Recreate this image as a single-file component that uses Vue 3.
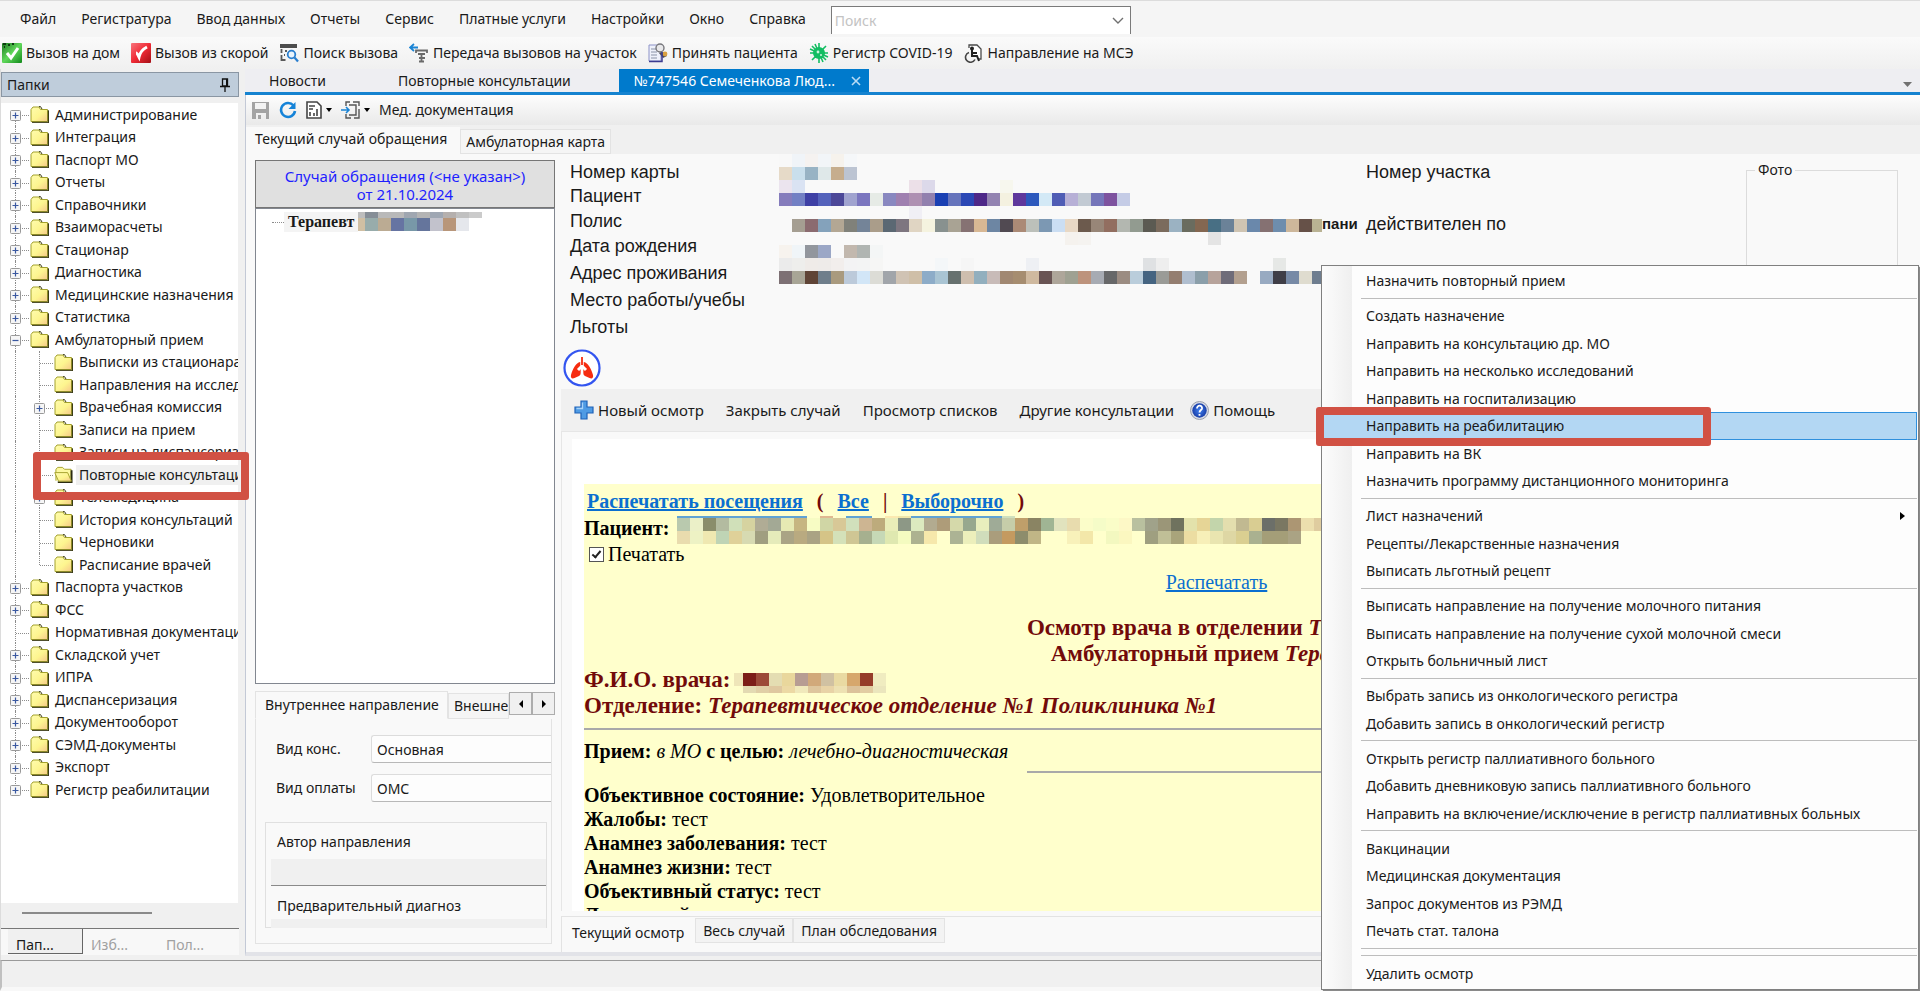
<template>
  <div class="app">
    <svg class="symbols" aria-hidden="true">
      <defs>
        <linearGradient id="folderFill" x1="0" y1="0" x2="1" y2="1">
          <stop offset="0" stop-color="#fffcae" />
          <stop offset="0.55" stop-color="#fdf58f" />
          <stop offset="1" stop-color="#f6c98a" />
        </linearGradient>
        <linearGradient id="greenFill" x1="0" y1="0" x2="1" y2="1">
          <stop offset="0" stop-color="#1f7a22" />
          <stop offset="0.5" stop-color="#5fd75a" />
          <stop offset="1" stop-color="#128a1b" />
        </linearGradient>
        <linearGradient id="redFill" x1="0" y1="0" x2="1" y2="1">
          <stop offset="0" stop-color="#f8747c" />
          <stop offset="0.5" stop-color="#ef2b36" />
          <stop offset="1" stop-color="#a40f16" />
        </linearGradient>
        <radialGradient id="helpFill">
          <stop offset="0" stop-color="#3f7ff0" />
          <stop offset="1" stop-color="#1a3fa8" />
        </radialGradient>
        <symbol id="folder" viewBox="0 0 19 17">
          <path d="M2 16.500h16V4.500h1V17H2z" fill="#3d3d16" />
          <path d="M1 15.500V3.500l2-2.500h6l1.500 2.500H17.500v12z" fill="url(#folderFill)" stroke="#a3a12c" />
          <path d="M9 .6h1.500L12 3" fill="none" stroke="#3d3d16" />
          <path d="M2 16.300h16.300V4.500" fill="none" stroke="#3d3d16" />
        </symbol>
        <symbol id="folder-open" viewBox="0 0 20 17">
          <path d="M2 15V3l2-2h5l2 2h7v10" fill="#fdf9a0" stroke="#a3a12c" />
          <path d="M18.500 4v12.500H4" fill="none" stroke="#2b2b10" stroke-width="2" />
          <path d="M.8 6.500h13.500l4 9H4.800z" fill="url(#folderFill)" stroke="#a3a12c" />
        </symbol>
      </defs>
    </svg>

    <header class="menubar">
      <button v-for="item in mainMenu" :key="item" class="menubar-item">{{ item }}</button>
      <div class="search">
        <input type="text" placeholder="Поиск" aria-label="Поиск" />
        <svg width="12" height="8" viewBox="0 0 12 8">
          <path d="M1 1l5 5 5-5" fill="none" stroke="#707070" stroke-width="1.400" />
        </svg>
      </div>
    </header>

    <div class="quickbar">
      <button class="quick">
        <svg width="20" height="20" viewBox="0 0 20 20">
          <rect width="20" height="20" rx="1" fill="url(#greenFill)" />
          <path d="M5 10l4 5 7-10" fill="none" stroke="#fff" stroke-width="3" />
          <path d="M1 1h3M6 2h2M2 4h1M10 1h2" stroke="#0d3d10" stroke-width="2" />
        </svg>
        Вызов на дом
      </button>
      <button class="quick">
        <svg width="20" height="20" viewBox="0 0 20 20">
          <rect width="20" height="20" rx="1" fill="url(#redFill)" />
          <path d="M5 10c1 0 2 2 3 4 1-5 4-8 8-10" fill="none" stroke="#fff" stroke-width="3" />
        </svg>
        Вызов из скорой
      </button>
      <button class="quick">
        <svg width="20" height="20" viewBox="0 0 20 20">
          <path d="M1 1h17v4H1z" fill="#4c4c4c" />
          <path d="M2.500 6v4M2.500 12v5h4M6 8h2M5 12h1" fill="none" stroke="#5a5a5a" stroke-width="1.800" />
          <circle cx="12.500" cy="11.500" r="3.800" fill="#eaf4fc" stroke="#2a7fcf" stroke-width="1.800" />
          <path d="M15.500 14.500l3.500 4" stroke="#2a7fcf" stroke-width="2.200" />
        </svg>
        Поиск вызова
      </button>
      <button class="quick">
        <svg width="20" height="20" viewBox="0 0 20 20">
          <path d="M1 4.500h8M5 1L1 4.500 5 8" fill="none" stroke="#1b84d4" stroke-width="1.800" />
          <path d="M7 10V7.500h11V10M9 11h7M10 15h6M10 18.500h5M12.500 11v7" fill="none" stroke="#6a6a6a" stroke-width="1.800" />
        </svg>
        Передача вызовов на участок
      </button>
      <button class="quick">
        <svg width="20" height="20" viewBox="0 0 20 20">
          <path d="M1 2h12v16H1z" fill="#eef1fb" stroke="#8d93c8" />
          <path d="M3 6h6M3 9h6M3 12h6M3 15h6" stroke="#8a93a8" />
          <circle cx="12" cy="5" r="4" fill="#e8e8ea" stroke="#77777c" stroke-width="1.400" />
          <path d="M11 10c4-2 7 0 8 3l-4 2z" fill="#4a4a58" />
          <circle cx="17" cy="11" r="2.400" fill="#d8a040" />
          <path d="M1 18.500h13V9" fill="none" stroke="#3c3c90" stroke-width="1.500" />
        </svg>
        Принять пациента
      </button>
      <button class="quick">
        <svg width="20" height="20" viewBox="0 0 20 20">
          <path
            d="M10 0v20M1 10h18M3 3l14 14M17 3L3 17M6 1l8 18M1 6l18 8"
            stroke="#12bd62"
            stroke-width="1.600"
          />
          <circle cx="10" cy="10" r="6" fill="#12bd62" />
          <circle cx="9" cy="9" r="1.400" fill="#c9f5dd" />
          <circle cx="12" cy="12" r="1" fill="#c9f5dd" />
        </svg>
        Регистр COVID-19
      </button>
      <button class="quick">
        <svg width="20" height="20" viewBox="0 0 20 20">
          <path d="M6 5V2h8l4 4v10h-3" fill="#fff" stroke="#4a4a4a" stroke-width="1.300" />
          <circle cx="9" cy="5.500" r="2" fill="#222" />
          <path d="M9 7v6h5l2 5M9 10h5" fill="none" stroke="#222" stroke-width="2" />
          <path d="M6 9.500a5 5 0 1 0 6 7" fill="none" stroke="#444" stroke-width="1.600" />
        </svg>
        Направление на МСЭ
      </button>
    </div>

    <div class="workspace">
      <aside class="folders">
        <div class="folders-title">
          <span>Папки</span>
          <svg width="10" height="14" viewBox="0 0 10 14">
            <path d="M2.500 1h5v7h-5zM0 8.500h10M5 9v5" fill="none" stroke="#111" stroke-width="1.300" />
            <path d="M6 1h2v7H6z" fill="#111" />
          </svg>
        </div>

        <ul class="tree">
          <li
            v-for="node in tree"
            :key="node.name"
            :class="['node', `level-${node.level}`, { last: node.last, current: node.current }]"
          >
            <span class="branch"></span>
            <button v-if="node.toggle" class="toggle" :aria-label="node.name">
              <svg width="11" height="11" viewBox="0 0 11 11">
                <rect x="0.500" y="0.500" width="10" height="10" rx="1" fill="#f6f6f6" stroke="#999" />
                <path
                  :d="node.toggle === 'open' ? 'M2.500 5.500h6' : 'M2.500 5.500h6M5.500 2.500v6'"
                  stroke="#3a58a0"
                  stroke-width="1.200"
                />
              </svg>
            </button>
            <svg class="folder" width="19" height="17">
              <use :href="node.current ? '#folder-open' : '#folder'" />
            </svg>
            <button class="node-name">{{ node.name }}</button>
          </li>
        </ul>

        <div class="tree-scroll"><span></span></div>
        <div class="folder-tabs">
          <button class="active">Пап...</button>
          <button>Изб...</button>
          <button>Пол...</button>
        </div>
        <div class="marker marker-folder"></div>
      </aside>

      <main class="documents">
        <nav class="doc-tabs">
          <button class="doc-tab">Новости</button>
          <button class="doc-tab">Повторные консультации</button>
          <button class="doc-tab active">
            №747546 Семеченкова Люд...
            <svg width="10" height="10" viewBox="0 0 10 10">
              <path d="M1 1l8 8M9 1L1 9" stroke="#b9dcf5" stroke-width="1.600" />
            </svg>
          </button>
          <svg class="doc-tabs-more" width="9" height="5" viewBox="0 0 9 5">
            <path d="M0 0h9L4.500 5z" fill="#717171" />
          </svg>
        </nav>

        <div class="toolbar">
          <button aria-label="Сохранить">
            <svg width="19" height="19" viewBox="0 0 19 19">
              <path d="M1 1h17v17h-3v-6H5v6H1z" fill="#a3a3a3" />
              <path d="M4 2h11v6H4z" fill="#f3f3f3" />
              <path d="M7 14h3v4H7z" fill="#a3a3a3" />
            </svg>
          </button>
          <button aria-label="Обновить">
            <svg width="18" height="18" viewBox="0 0 18 18">
              <path d="M14.500 4.500A7 7 0 1 0 16 10" fill="none" stroke="#1583d8" stroke-width="2.600" />
              <path d="M16.500 1v7h-7z" fill="#1583d8" />
            </svg>
          </button>
          <button aria-label="Отчет">
            <svg width="16" height="18" viewBox="0 0 16 18">
              <path d="M1 1h10l4 4v12H1z" fill="#fff" stroke="#444" stroke-width="1.600" />
              <path d="M3 5h6M3 8h4M4 11v4M8 12v3M11 8v7" stroke="#444" stroke-width="1.600" />
            </svg>
            <svg width="6" height="4" viewBox="0 0 6 4"><path d="M0 0h6L3 4z" /></svg>
          </button>
          <button aria-label="Передать">
            <svg width="19" height="18" viewBox="0 0 19 18">
              <path d="M5 5V1h4M12 1h6v4M18 8v9h-5M10 17H5v-4M8 4h7v10H8" fill="none" stroke="#555" stroke-width="1.400" />
              <path d="M0 9h8M5 6l3 3-3 3" fill="none" stroke="#1b84d4" stroke-width="1.600" />
            </svg>
            <svg width="6" height="4" viewBox="0 0 6 4"><path d="M0 0h6L3 4z" /></svg>
          </button>
          <button>Мед. документация</button>
        </div>

        <nav class="page-tabs">
          <button class="active">Текущий случай обращения</button>
          <button>Амбулаторная карта</button>
        </nav>

        <div class="case">
          <section class="case-side">
            <div class="case-title">Случай обращения (&lt;не указан&gt;)<br />от 21.10.2024</div>
            <div class="case-list">
              <div class="visit">
                <span class="visit-line"></span>
                <b>Терапевт</b>
                <Mosaic :strips="visitStrips" :width="127" :height="20" />
              </div>
            </div>

            <div class="referral">
              <div class="referral-tabs">
                <button class="active">Внутреннее направление</button>
                <button class="cut">Внешнее</button>
                <button class="spin" aria-label="Назад">
                  <svg width="4" height="8" viewBox="0 0 4 8"><path d="M4 0v8L0 4z" /></svg>
                </button>
                <button class="spin" aria-label="Вперед">
                  <svg width="4" height="8" viewBox="0 0 4 8"><path d="M0 0v8l4-4z" /></svg>
                </button>
              </div>
              <div class="referral-body">
                <div class="field">
                  <label for="kind">Вид конс.</label>
                  <input id="kind" type="text" value="Основная" />
                </div>
                <div class="field">
                  <label for="payment">Вид оплаты</label>
                  <input id="payment" type="text" value="ОМС" />
                </div>
                <div class="author">
                  <label for="author">Автор направления</label>
                  <input id="author" type="text" readonly />
                  <label for="diagnosis">Предварительный диагноз</label>
                  <input id="diagnosis" class="short" type="text" readonly />
                </div>
              </div>
            </div>
          </section>

          <section class="case-main">
            <div class="patient">
              <div class="labels">
                <span v-for="label in patientLabels" :key="label">{{ label }}</span>
              </div>
              <Mosaic :strips="patientStrips" :width="543" :height="130" />
              <b class="insurer">пани</b>
              <div class="district">
                <span>Номер участка</span>
                <span>действителен по</span>
              </div>
              <fieldset class="photo">
                <legend>Фото</legend>
              </fieldset>
            </div>

            <div class="flags">
              <svg width="38" height="38" viewBox="0 0 38 38">
                <circle cx="19" cy="19" r="17.500" fill="#fff" stroke="#3355f0" stroke-width="2.200" />
                <path
                  d="M17.500 13c-4 0-8 7-9.500 13-.6 3 1 4 3.500 3l4.500-2c1.500-1 1.700-2 1.700-4zM20.500 13c4 0 8 7 9.500 13 .6 3-1 4-3.500 3l-4.500-2c-1.500-1-1.700-2-1.700-4z"
                  fill="#f62c10"
                />
                <path d="M19 7.500v11M19 17l-4 4M19 17l4 4" fill="none" stroke="#fff" stroke-width="3" />
                <path d="M19 8v8" fill="none" stroke="#f62c10" stroke-width="1.800" />
              </svg>
            </div>

            <div class="visit-toolbar">
              <button>
                <svg width="20" height="20" viewBox="0 0 20 20">
                  <path d="M7 1h6v6h6v6h-6v6H7v-6H1V7h6z" fill="#4f9be4" stroke="#1e62b8" stroke-width="1.200" />
                  <path d="M8.500 2.500v6h-6" fill="none" stroke="#a8d2f8" stroke-width="1.300" />
                </svg>
                Новый осмотр
              </button>
              <button>Закрыть случай</button>
              <button>Просмотр списков</button>
              <button>Другие консультации</button>
              <button class="help">
                <svg width="19" height="19" viewBox="0 0 19 19">
                  <circle cx="9.500" cy="9.500" r="9" fill="#d7dbe6" stroke="#9a9fae" />
                  <circle cx="9.500" cy="9.500" r="7.200" fill="url(#helpFill)" />
                  <path d="M7 7.500c0-4 5.500-3.500 5 0-.3 1.600-2.500 1.500-2.500 4M9.500 13v1.800" fill="none" stroke="#fff" stroke-width="1.800" />
                </svg>
                Помощь
              </button>
            </div>

            <div class="sheet">
              <article class="protocol">
                <p class="print-links">
                  <a href="#">Распечатать посещения</a>
                  <span>(</span>
                  <a href="#">Все</a>
                  <span>|</span>
                  <a href="#">Выборочно</a>
                  <span>)</span>
                </p>
                <div class="patient-line">
                  <b>Пациент:</b>
                  <Mosaic :strips="nameStrips" :width="644" :height="28" />
                </div>
                <label class="print-check"><input type="checkbox" checked />Печатать</label>
                <p class="print-one"><a href="#">Распечатать</a></p>
                <h2>Осмотр врача в отделении <i>Терапевт</i></h2>
                <h2>Амбулаторный прием <i>Терапевт</i></h2>
                <div class="doctor">
                  <b>Ф.И.О. врача:</b>
                  <Mosaic :strips="doctorStrips" :width="153" :height="20" />
                </div>
                <p class="department">Отделение: <i>Терапевтическое отделение №1 Поликлиника №1</i></p>
                <hr />
                <p class="aim"><b>Прием:</b> <i>в МО</i> <b>с целью:</b> <i>лечебно-диагностическая</i></p>
                <hr class="short" />
                <p v-for="row in findings" :key="row[0]">
                  <b>{{ row[0] }}:</b> {{ row[1] }}
                </p>
              </article>
            </div>

            <nav class="sheet-tabs">
              <button class="active">Текущий осмотр</button>
              <button>Весь случай</button>
              <button>План обследования</button>
            </nav>
          </section>
        </div>
      </main>
    </div>

    <footer class="statusbar"></footer>

    <ul class="context-menu">
      <template v-for="(item, index) in contextMenu" :key="index">
        <li v-if="item === '-'" class="separator"></li>
        <li v-else :class="['entry', { selected: item === selectedEntry }]">
          <button>{{ item }}</button>
          <svg v-if="item === 'Лист назначений'" width="5" height="8" viewBox="0 0 5 8">
            <path d="M0 0v8l5-4z" />
          </svg>
          <div v-if="item === selectedEntry" class="marker marker-entry"></div>
        </li>
      </template>
    </ul>
  </div>
</template>

<script setup>
import { h } from "vue";

// Blurred-out personal data: strips of coloured cells, "-" leaves a cell empty
const CELL = 13;

const Mosaic = (props) =>
  h(
    "svg",
    {
      width: props.width,
      height: props.height,
      viewBox: `0 0 ${props.width} ${props.height}`,
      "shape-rendering": "crispEdges",
      style: { flex: "none", display: "block" },
    },
    props.strips.flatMap(({ x = 0, y, height = CELL, cells }) =>
      cells.split(" ").map((color, i) =>
        color === "-"
          ? null
          : h("rect", { x: x + i * CELL, y, width: CELL, height, fill: `#${color}` })
      )
    )
  );
Mosaic.props = ["strips", "width", "height"];

const mainMenu = [
  "Файл",
  "Регистратура",
  "Ввод данных",
  "Отчеты",
  "Сервис",
  "Платные услуги",
  "Настройки",
  "Окно",
  "Справка",
];

const root = (name, toggle = "closed") => ({ name, toggle, level: 1 });
const child = (name, extra = {}) => ({ name, level: 2, ...extra });

const tree = [
  root("Администрирование"),
  root("Интеграция"),
  root("Паспорт МО"),
  root("Отчеты"),
  root("Справочники"),
  root("Взаиморасчеты"),
  root("Стационар"),
  root("Диагностика"),
  root("Медицинские назначения"),
  root("Статистика"),
  root("Амбулаторный прием", "open"),
  child("Выписки из стационара"),
  child("Направления на исследования"),
  child("Врачебная комиссия", { toggle: "closed" }),
  child("Записи на прием"),
  child("Записи на диспансеризацию"),
  child("Повторные консультации", { current: true }),
  child("Телемедицина", { toggle: "closed" }),
  child("История консультаций"),
  child("Черновики"),
  child("Расписание врачей", { last: true }),
  root("Паспорта участков"),
  root("ФСС"),
  root("Нормативная документация", ""),
  root("Складской учет"),
  root("ИПРА"),
  root("Диспансеризация"),
  root("Документооборот"),
  root("СЭМД-документы"),
  root("Экспорт"),
  { ...root("Регистр реабилитации"), last: true },
];

const patientLabels = [
  "Номер карты",
  "Пациент",
  "Полис",
  "Дата рождения",
  "Адрес проживания",
  "Место работы/учебы",
  "Льготы",
];

const findings = [
  ["Объективное состояние", "Удовлетворительное"],
  ["Жалобы", "тест"],
  ["Анамнез заболевания", "тест"],
  ["Анамнез жизни", "тест"],
  ["Объективный статус", "тест"],
  ["Локальный", ""],
];

const selectedEntry = "Направить на реабилитацию";

const contextMenu = [
  "Назначить повторный прием",
  "-",
  "Создать назначение",
  "Направить на консультацию др. МО",
  "Направить на несколько исследований",
  "Направить на госпитализацию",
  "Направить на реабилитацию",
  "Направить на ВК",
  "Назначить программу дистанционного мониторинга",
  "-",
  "Лист назначений",
  "Рецепты/Лекарственные назначения",
  "Выписать льготный рецепт",
  "-",
  "Выписать направление на получение молочного питания",
  "Выписать направление на получение сухой молочной смеси",
  "Открыть больничный лист",
  "-",
  "Выбрать запись из онкологического регистра",
  "Добавить запись в онкологический регистр",
  "-",
  "Открыть регистр паллиативного больного",
  "Добавить дневниковую запись паллиативного больного",
  "Направить на включение/исключение в регистр паллиативных больных",
  "-",
  "Вакцинации",
  "Медицинская документация",
  "Запрос документов из РЭМД",
  "Печать стат. талона",
  "-",
  "-",
  "Удалить осмотр",
];

const visitStrips = [
  { x: -6, y: 0, height: 6, cells: "bdbdbd 868e97 b9b9b9 b9b9b9 a0a7b1 b4b4b4 9fa7b3 b5b0ae c0c0c0 cbcbcb" },
  { x: -6, y: 6, cells: "d0bfa3 98acab bbab93 6674a2 7898a8 65759c c2c2cc b8967a e5e7ec" },
];

const patientStrips = [
  { y: 0, cells: "f8f8f8 f0f4f8 f5f2f0 f2f5f8 f6f2ec f5f7f9" },
  { y: 13, cells: "e6dac8 c9dfec 98b3c4 dfe8e9 c6ad8d bcc4d2" },
  { y: 26, cells: "ebe4ee dae3f3 - - - - - - - - ece0e8 dcd9ea - - - - - f7f7ee" },
  {
    y: 39,
    cells:
      "857cbc 7280c4 3e40a5 5462bb 4c4898 a0a3cf 7b76bf e6ebe6 8988c0 9f80b0 ae90b2 9180ae 1a40b3 6674bc 2b48b5 4e2888 9383b1 f4f1e0 5f389c 2d59bd d3e9f6 4f5db5 b7b0d6 c2cad3 7576ba 7e539f c5cce6",
  },
  { x: 130, y: 52, cells: "f0eff5" },
  {
    x: 13,
    y: 65,
    cells:
      "a59e92 8b6b70 84a2bb b3a794 80817a 748498 aa9d8a 5b6873 7e7680 e0d5c3 f5f3df 88918f a9a394 867273 d8b894 6d86a3 514a52 ab8a76 bcc0ba 7c98b3 cbdef3 e8d8c5 6c5a4d 988678 926e60 b3b7b0 929b90 5b5a52 7b6b5d 9bb2c2 6a6c5f 846751 486f84 6b8298 cfc4b2 6a88ab 857172 6e8dad cdb79b 665148 b9b293",
  },
  { x: 286, y: 78, cells: "f5f2ee f5f3f0 - - - - - - - - - e4e4e4" },
  { y: 91, cells: "f7f3ee f0f5f8 92969d 9ba7c6 - c2b8ae b0b5b2 f4f6f6" },
  {
    y: 104,
    cells:
      "ebebeb eeeeec efebe8 eeebe9 f2eeec f3f3f4 f3f4f4 f6f6f5 - - - - f4f7f9 - f6f6f6 - - - - eef0f4 - - - - - - - - dfe1e3 eeeeee - - - - - - - - e6e8e6",
  },
  {
    y: 117,
    cells:
      "7d7074 a8a596 5f4436 6f7e8b a99a7e bccada d2e6f7 dcdcd6 a1a5aa d0c3b4 cfbfa8 8dacc8 a9c4d3 67716f cebeae 92afbe c8bbb8 a18872 a68d70 cfb99f 695454 aea69a 9fa192 bd937c a7abb3 676869 9b8c82 bacddb 456481 9a9b97 947e70 b0becf 8b9faa b7a39b 6f6c79 b3a08f - 98aac1 3f3e47 778aa6 dfdccf 6e7d8f",
  },
];

const nameStrips = [
  {
    y: 0,
    height: 2,
    cells:
      "5fa3d4 5fa3d4 5fa3d4 5fa3d4 5fa3d4 5fa3d4 5fa3d4 5fa3d4 5fa3d4 5fa3d4 - e0b890 - 5fa3d4 5fa3d4 - fce9b0 f0e6a8 5fa3d4 5fa3d4 5fa3d4 5fa3d4 5fa3d4 5fa3d4 5fa3d4 cfe0bd",
  },
  {
    y: 2,
    cells:
      "b9c9ae ebf0c8 8a8d6b b3bba0 d0e0b9 d6d3a0 b0ac95 a3a995 e6e9b3 c6b581 f7fcc4 d0d6a5 d8c897 d1e0bc cdb592 bdab7c e9edb8 8d9886 dceabf b2ab90 ae9c79 d5d9aa 97a88e e8eebd 9fab97 c6cda9 bf9f6a 8a8463 a0b594 e1e3be e8dcae fbfdc9 f5fcc8 fafdc8 fdf8c6 b9c09f a0a28a 9b9678 6f725e e3e2ab e6d596 c3d5ab e3deae c1b991 d9cd92 6c6f69 7a7762 ac9673 ecdfae dfcc9f",
  },
  {
    y: 15,
    cells:
      "e9dcae edf2c4 efe8b1 bfd4b5 dfd199 d7dab2 a09e80 e5ebba aaa485 b9aa80 aaa384 d5c487 d4e1b9 cfc694 a6b08f c6d8b6 dfe8b0 f4fbc0 adb290 f6e8ab - acb394 ecefbb d0ddbb aa9d7c c49a60 8d8d6c c0b686 - - f8f1ba f3e7a9 - f3f8c0 fbf7c0 - 9f9f80 c0bf97 a9a47b ecdda2 f7efb8 e9e5b0 ded7a4 dacf91 aab190 a49e78 a49e78 aaa384",
  },
];

const doctorStrips = [
  { x: -4, y: 0, cells: "efe6b9 7c1e18 9c4a38 e4ddb2 e9d79c b79d93 d1a97a d0c1a2 e9daa2 d6a76c 963d2a f0ecc0" },
  { x: -4, y: 13, height: 7, cells: "- e3dab2 e0cfa6 dfc8a0 ecd9a4 f0e9bb dec69d e8d3a6 ede1b2 dcc29a e2cda2 ebe6bd" },
];
</script>

<style>
body {
  margin: 0;
  overflow: hidden;
}
</style>

<style scoped>
.app {
  position: relative;
  display: flex;
  flex-direction: column;
  height: 100vh;
  overflow: hidden;
  background: #f0f0f0;
  color: #1a1a1a;
  font-family: "Noto Sans", "Open Sans", sans-serif;
  font-size: 14px;
  line-height: 20px;
}

.app *,
.app *::before {
  box-sizing: border-box;
}

.symbols {
  position: absolute;
  width: 0;
  height: 0;
}

button,
input {
  padding: 0;
  border: none;
  background: none;
  color: inherit;
  font: inherit;
  white-space: nowrap;
}

button {
  flex: none;
  text-align: left;
}

ul,
p,
h2 {
  margin: 0;
  padding: 0;
  list-style: none;
}

/* Menu and quick actions */
.menubar {
  display: flex;
  align-items: center;
  gap: 25px;
  height: 37px;
  padding-left: 20px;
  border-top: 1px solid #dcdcdc;
  background: #f5f5f5;
}

.search {
  display: flex;
  align-items: center;
  align-self: flex-start;
  width: 300px;
  height: 28px;
  margin-top: 5px;
  padding: 0 6px 0 3px;
  border: 1px solid #7a7a7a;
  border-bottom: none;
  background: #fff;
}

.search input {
  flex: 1;
  min-width: 0;
}

.search input::placeholder {
  color: #c3c3c3;
  opacity: 1;
}

.quickbar {
  display: flex;
  align-items: center;
  gap: 11px;
  height: 32px;
  padding-left: 2px;
  background: linear-gradient(#fafafa, #f0f0f0);
}

.quick {
  display: flex;
  align-items: center;
  gap: 4px;
}

.workspace {
  display: grid;
  grid-template-columns: 239px 1fr;
  gap: 6px;
  flex: 1;
  min-height: 0;
}

/* Folders */
.folders {
  position: relative;
  display: flex;
  flex-direction: column;
  min-width: 0;
  padding-top: 3px;
  border-left: 1px solid #dcdcdc;
}

.folders-title {
  display: flex;
  align-items: center;
  justify-content: space-between;
  height: 25px;
  padding: 0 8px 0 5px;
  border: 1px solid #8a96a3;
  background: #bfcddb;
}

.tree {
  flex: 1;
  margin-top: 6px;
  margin-right: 1px;
  overflow: hidden;
  background: #fff;
}

.node {
  position: relative;
  display: flex;
  align-items: center;
  height: 22px;
  padding-left: 29px;
}

.node:nth-child(odd) {
  height: 23px;
}

.level-2 {
  padding-left: 53px;
}

/* dotted connectors lie under the toggles */
.node::before,
.level-2 .branch::after {
  content: "";
  position: absolute;
  top: 0;
  bottom: 0;
  left: 14px;
  border-left: 1px dotted #8c8c8c;
}

.level-2 .branch::after {
  left: 38px;
}

.node:first-child::before {
  top: 11px;
}

.level-1.last::before,
.level-2.last .branch::after {
  bottom: 11px;
}

.branch::before {
  content: "";
  position: absolute;
  top: 12px;
  left: 15px;
  width: 13px;
  border-top: 1px dotted #8c8c8c;
}

.level-2 .branch::before {
  left: 39px;
}

.toggle {
  position: absolute;
  top: 7px;
  left: 9px;
  width: 11px;
  height: 11px;
}

.toggle svg {
  display: block;
}

.level-2 .toggle {
  left: 33px;
}

.folder {
  position: relative;
  flex: none;
}

.node-name {
  margin-left: 3px;
  padding: 0 3px;
}

.current .node-name {
  flex: 1;
  background: #f0f0f0;
}

.tree-scroll {
  height: 25px;
  padding: 9px 21px;
}

.tree-scroll span {
  display: block;
  width: 130px;
  height: 2px;
  background: #8a8a8a;
}

.folder-tabs {
  display: flex;
  height: 27px;
  margin-bottom: 5px;
  padding-left: 7px;
  border-top: 1px solid #777;
  background: #f8f8f8;
  color: #a0a0a0;
}

.folder-tabs button {
  width: 75px;
  height: 25px;
  padding: 6px 8px 0;
}

.folder-tabs .active {
  border-right: 1px solid #666;
  border-bottom: 1px solid #666;
  background: #f0f0f0;
  color: #1a1a1a;
}

.marker {
  position: absolute;
  border: 8px solid #d15144;
  border-radius: 3px;
  pointer-events: none;
}

.marker-folder {
  top: 383px;
  left: 32px;
  z-index: 1;
  width: 216px;
  height: 48px;
}

/* Documents */
.documents {
  display: flex;
  flex-direction: column;
  min-width: 0;
  min-height: 0;
  margin-bottom: 4px;
}

.doc-tabs {
  position: relative;
  display: flex;
  align-items: center;
  height: 26px;
  border-bottom: 3px solid #1583d0;
  background: #eeeef2;
}

.doc-tab {
  padding: 0 48px 0 24px;
}

.doc-tab.active {
  display: flex;
  align-items: center;
  justify-content: space-between;
  width: 250px;
  height: 23px;
  padding: 0 8px 0 15px;
  background: #007acc;
  color: #fff;
}

.doc-tabs-more {
  position: absolute;
  top: 13px;
  right: 8px;
}

.toolbar {
  display: flex;
  align-items: center;
  gap: 9px;
  height: 30px;
  padding-left: 5px;
  border-left: 1px solid #c3c9d6;
  background: linear-gradient(#fdfdfd, #e9e9e9);
}

.toolbar button {
  display: flex;
  align-items: center;
  gap: 4px;
}

.page-tabs {
  display: flex;
  align-items: flex-end;
  height: 29px;
  border-left: 1px solid #c3c9d6;
  background: #f0f0f0;
}

.page-tabs button {
  height: 25px;
  padding: 0 5px;
  border: 1px solid #e3e3e3;
  background: #f5f5f5;
}

.page-tabs .active {
  height: 27px;
  padding: 0 12px 3px 8px;
  border-color: #f9f9f9;
  background: #f9f9f9;
}

.case {
  display: grid;
  grid-template-columns: 300px 1fr;
  gap: 6px;
  flex: 1;
  min-height: 0;
  padding: 0 0 0 9px;
  border-bottom: 4px solid #e2e3e8;
  border-left: 1px solid #c3c9d6;
  background: #f9f9f9;
}

.case-side {
  display: flex;
  flex-direction: column;
  min-height: 0;
  padding: 6px 0 8px;
}

.case-title {
  height: 48px;
  padding-top: 6px;
  border: 1px solid #767676;
  background: #e0e0e0;
  color: #1f1fff;
  font-size: 15px;
  line-height: 18px;
  text-align: center;
}

.case-list {
  flex: 1;
  border: 1px solid #828790;
  background: #fff;
}

.visit {
  display: flex;
  align-items: center;
  height: 26px;
  padding-left: 16px;
  font-family: "Liberation Serif", serif;
  font-size: 16px;
}

.visit-line {
  width: 12px;
  border-top: 1px dotted #8c8c8c;
}

.visit b {
  padding: 0 4px;
  background: #f4f4f4;
}

.referral {
  margin-top: 7px;
}

.referral-tabs {
  display: flex;
  align-items: flex-end;
  height: 28px;
}

.referral-tabs button {
  height: 26px;
  border: 1px solid #e3e3e3;
  background: #f5f5f5;
}

.referral-tabs .active {
  width: 193px;
  height: 28px;
  padding: 0 9px;
  border-bottom-color: #f9f9f9;
  background: #f9f9f9;
}

.referral-tabs .cut {
  flex: 1;
  min-width: 0;
  padding-left: 5px;
  overflow: hidden;
}

.referral-tabs .spin {
  display: flex;
  align-items: center;
  align-self: flex-start;
  justify-content: center;
  width: 23px;
  height: 23px;
  margin-top: 1px;
  border-color: #adadad;
  background: #f0f0f0;
}

.referral-body {
  height: 225px;
  margin-right: 3px;
  padding: 16px 0 0 9px;
  border: 1px solid #e3e3e3;
  border-top: none;
}

.field {
  display: grid;
  grid-template-columns: 95px 1fr;
  align-items: center;
  margin-bottom: 11px;
  padding-left: 11px;
}

.field input {
  width: 100%;
  height: 28px;
  padding-left: 5px;
  border: 1px solid #dcdcdc;
  border-right: none;
  border-bottom-color: #b8b8b8;
  border-radius: 3px 0 0 3px;
  background: #fdfdfd;
}

.author {
  display: flex;
  flex-direction: column;
  height: 106px;
  margin: 20px 4px 0 0;
  padding: 9px 0 0 5px;
  border: 1px solid #e0e0e0;
}

.author label {
  padding-left: 6px;
}

.author input {
  flex: none;
  width: 100%;
  height: 27px;
  margin: 7px 0 10px;
  border-bottom: 1px solid #8a8a8a;
  background: #f0f0f0;
}

.author .short {
  height: 9px;
  margin: 3px 0 0;
  border-bottom: none;
}

.case-main {
  display: flex;
  flex-direction: column;
  min-width: 0;
  min-height: 0;
}

/* Patient card */
.patient {
  display: flex;
  flex: none;
  height: 195px;
  padding-left: 9px;
}

.labels,
.district {
  display: grid;
  width: 209px;
  font-family: "Liberation Sans", Arial, sans-serif;
  font-size: 18px;
}

.labels {
  grid-template-rows: 25px 24px 25px 26px 27px 27px 27px;
  padding-top: 5px;
  align-items: center;
}

.insurer {
  width: 36px;
  padding-top: 60px;
  overflow: hidden;
  font-family: "Liberation Sans", Arial, sans-serif;
  font-size: 15px;
}

.district {
  grid-template-rows: 52px 24px;
  flex: 1;
  padding: 8px 0 0 8px;
  align-items: start;
}

.photo {
  width: 152px;
  margin: 6px 22px 0 0;
  padding: 0 8px;
  border: 1px solid #dcdcdc;
}

.photo legend {
  padding: 0 3px;
}

.flags {
  flex: none;
  height: 40px;
  padding-left: 2px;
}

.visit-toolbar {
  display: flex;
  align-items: center;
  flex: none;
  gap: 22px;
  height: 42px;
  padding-left: 13px;
  background: #f0f0f0;
  font-size: 15px;
}

.visit-toolbar button {
  display: flex;
  align-items: center;
  gap: 4px;
}

.visit-toolbar .help {
  margin-left: -6px;
}

/* Protocol */
.sheet {
  flex: 1;
  min-height: 0;
  margin-bottom: 5px;
  padding: 7px 0 0 10px;
  border-top: 1px solid #e6e6e6;
  border-left: 1px solid #e6e6e6;
  overflow: hidden;
}

.protocol {
  height: 100%;
  padding: 2px 58px 0 0;
  border: 0 solid #fff;
  border-width: 45px 13px 0 12px;
  overflow: hidden;
  background: #ffffcc;
  color: #000;
  font-family: "Liberation Serif", "Times New Roman", serif;
  font-size: 20px;
  line-height: 24px;
}

.protocol a {
  color: #0b6fd0;
}

.protocol h2,
.doctor,
.department {
  color: #720a0a;
  font-size: 23px;
  font-weight: bold;
  line-height: 26px;
}

.print-links {
  display: flex;
  gap: 14px;
  padding-left: 3px;
  color: #720a0a;
  font-weight: bold;
  line-height: 30px;
}

.patient-line {
  display: flex;
  gap: 7px;
  height: 28px;
}

.print-check {
  display: flex;
  align-items: center;
  gap: 4px;
  height: 20px;
  padding-left: 5px;
}

.print-check input {
  position: relative;
  width: 15px;
  height: 15px;
  margin: 0;
  border: 1px solid #555;
  background: #fff;
  appearance: none;
}

.print-check input:checked::before {
  content: "";
  position: absolute;
  top: 1px;
  left: 4px;
  width: 5px;
  height: 9px;
  border: solid #222;
  border-width: 0 2px 2px 0;
  transform: rotate(40deg);
}

.print-one {
  margin-top: 6px;
  text-align: center;
}

.protocol h2 {
  text-align: center;
}

.print-one + h2 {
  margin-top: 21px;
}

.doctor {
  display: flex;
  align-items: flex-end;
  gap: 4px;
}

.protocol hr {
  height: 2px;
  margin: 9px 0;
  border: none;
  background: #a9a9a9;
}

.protocol hr.short {
  width: 30%;
  margin: 8px auto 10px;
}

.sheet-tabs {
  display: flex;
  align-items: flex-start;
  flex: none;
  height: 36px;
  border-top: 1px solid #e3e3e3;
  border-left: 1px solid #e3e3e3;
}

.sheet-tabs button {
  height: 25px;
  margin-top: 1px;
  padding: 0 7px;
  border: 1px solid #e3e3e3;
  background: #f3f3f3;
}

.sheet-tabs .active {
  height: 28px;
  margin-top: 0;
  padding: 3px 10px 0 9px;
  border-color: #f9f9f9;
  background: #f9f9f9;
}

.statusbar {
  flex: none;
  height: 31px;
  border-top: 1px solid #9a9a9a;
  border-bottom: 4px solid #f8f8f8;
  border-left: 2px solid #c0c0c0;
  background: #f0f0f0;
}

/* Context menu */
.context-menu {
  position: absolute;
  top: 265px;
  right: 1px;
  z-index: 2;
  width: 598px;
  padding: 1px 1px 2px;
  border: 1px solid #808080;
  background: linear-gradient(90deg, #fcfcfc, #efefef 30px, #fdfdfd 30px);
  box-shadow: 2px 2px 1px #8a8a8a;
}

.entry {
  position: relative;
  display: flex;
  align-items: center;
  justify-content: space-between;
  height: 28px;
  padding: 0 12px 0 43px;
}

.entry:nth-child(even) {
  height: 27px;
}

.entry.selected {
  border: 1px solid #2f90dd;
  padding-left: 42px;
  background: #b3d7f3;
}

.separator {
  height: 7px;
  margin-left: 38px;
  background: linear-gradient(#bdbdbd, #bdbdbd) 0 3px / 100% 1px no-repeat;
}

.separator:nth-child(odd) {
  height: 8px;
}

.marker-entry {
  top: -6px;
  left: -8px;
  width: 395px;
  height: 39px;
}
</style>
